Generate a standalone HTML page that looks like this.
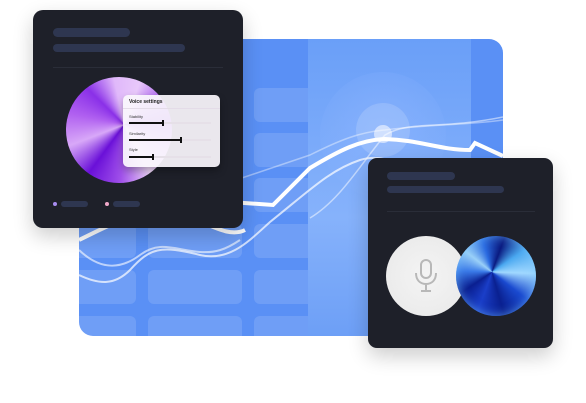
<!DOCTYPE html>
<html><head><style>
html,body{margin:0;padding:0;background:#fff;width:586px;height:403px;overflow:hidden;font-family:"Liberation Sans",sans-serif}
.abs{position:absolute}
</style></head><body>
<div class="abs" style="left:0;top:0;width:586px;height:403px">
<svg width="586" height="403" style="position:absolute;left:0;top:0">
<defs>
<clipPath id="bp"><rect x="79" y="39" width="424" height="297" rx="14"/></clipPath>
<radialGradient id="glow" cx="383" cy="130" r="80" gradientUnits="userSpaceOnUse"><stop offset="0" stop-color="#8fb6ff" stop-opacity=".6"/><stop offset="1" stop-color="#8fb6ff" stop-opacity="0"/></radialGradient>
<linearGradient id="col" x1="0" y1="0" x2="0" y2="1"><stop offset="0" stop-color="#6a9ff8"/><stop offset=".6" stop-color="#86b2fb"/><stop offset="1" stop-color="#6d9ff6"/></linearGradient>
</defs>
<g clip-path="url(#bp)">
<rect x="79" y="39" width="424" height="297" fill="#5a90f5"/>
<g fill="#ffffff" fill-opacity=".13">
<rect x="70" y="88" width="66" height="34" rx="6"/><rect x="148" y="88" width="94" height="34" rx="6"/><rect x="254" y="88" width="94" height="34" rx="6"/>
<rect x="70" y="133" width="66" height="34" rx="6"/><rect x="148" y="133" width="94" height="34" rx="6"/><rect x="254" y="133" width="94" height="34" rx="6"/>
<rect x="70" y="178" width="66" height="34" rx="6"/><rect x="148" y="178" width="94" height="34" rx="6"/><rect x="254" y="178" width="94" height="34" rx="6"/>
<rect x="70" y="224" width="66" height="34" rx="6"/><rect x="148" y="224" width="94" height="34" rx="6"/><rect x="254" y="224" width="94" height="34" rx="6"/>
<rect x="70" y="270" width="66" height="34" rx="6"/><rect x="148" y="270" width="94" height="34" rx="6"/><rect x="254" y="270" width="94" height="34" rx="6"/>
<rect x="70" y="316" width="66" height="34" rx="6"/><rect x="148" y="316" width="94" height="34" rx="6"/><rect x="254" y="316" width="94" height="34" rx="6"/>
</g>
<rect x="308" y="39" width="163" height="297" fill="url(#col)"/>
<circle cx="383" cy="135" r="63" fill="url(#glow)"/>
<circle cx="383" cy="130" r="27" fill="#fff" fill-opacity=".15"/>
<circle cx="383" cy="134" r="9" fill="#fff" fill-opacity=".55"/>
<path d="M79 240 C110 225 140 208 170 212 C200 216 225 240 245 230" stroke="#fff" stroke-width="4" fill="none"/>
<path d="M230 202 L273 205 L310 168 C340 150 360 140 385 139 C420 140 440 150 470 150 L475 143 L503 156" stroke="#fff" stroke-width="4" fill="none"/>
<path d="M79 250 C100 270 120 270 140 255 C160 240 175 250 200 252 C215 253 225 250 240 240" stroke="#fff" stroke-opacity=".6" stroke-width="2" fill="none"/>
<path d="M79 275 C100 285 115 285 130 270 C150 248 160 245 200 255 C230 262 250 240 270 222 C310 190 330 170 360 160 C400 148 430 190 450 210" stroke="#fff" stroke-opacity=".7" stroke-width="2" fill="none"/>
<path d="M230 182 L310 155 C340 140 360 132 385 130 C420 125 470 125 503 120" stroke="#fff" stroke-opacity=".4" stroke-width="1.5" fill="none"/>
<path d="M310 218 C340 200 360 165 385 135 C410 120 440 130 503 117" stroke="#fff" stroke-opacity=".5" stroke-width="1.5" fill="none"/>
</g>
</svg>

<!-- card 1 -->
<div class="abs" style="left:33px;top:10px;width:210px;height:218px;background:#1e2029;border-radius:10px;box-shadow:0 8px 20px rgba(0,0,0,.2)">
<div class="abs" style="left:20px;top:18px;width:77px;height:9px;border-radius:5px;background:#2e3650"></div>
<div class="abs" style="left:20px;top:34px;width:132px;height:8px;border-radius:4px;background:#2e3650"></div>
<div class="abs" style="left:20px;top:57px;width:170px;height:1px;background:#2a2d38"></div>
<div class="abs" style="left:33px;top:67px;width:106px;height:106px;border-radius:50%;background:conic-gradient(from 20deg at 55% 45%,#e8c8fa,#b067f0,#7a20e0,#c890f5,#f0d8fa,#a050ea,#6a10d8,#d8a8f8,#b060f0,#8a30e8,#e0b8fa,#e8c8fa)"></div>
<div class="abs" style="left:90px;top:85px;width:97px;height:72px;border-radius:5px;background:rgba(250,246,252,.93);box-shadow:0 4px 8px rgba(0,0,0,.3)">
<div class="abs" style="left:6px;top:4px;font-size:5px;font-weight:bold;color:#222">Voice settings</div>
<div class="abs" style="left:0;top:13px;width:97px;height:1px;background:#e4dce8"></div>
<div class="abs" style="left:6px;top:19px;font-size:4px;color:#333">Stability</div>
<div class="abs" style="left:6px;top:27px;width:82px;height:2px;background:#e6e0e8"></div>
<div class="abs" style="left:6px;top:27px;width:34px;height:2px;background:#111"></div><div class="abs" style="left:39px;top:25px;width:2px;height:6px;background:#111"></div>
<div class="abs" style="left:6px;top:36px;font-size:4px;color:#333">Similarity</div>
<div class="abs" style="left:6px;top:44px;width:82px;height:2px;background:#e6e0e8"></div>
<div class="abs" style="left:6px;top:44px;width:52px;height:2px;background:#111"></div><div class="abs" style="left:57px;top:42px;width:2px;height:6px;background:#111"></div>
<div class="abs" style="left:6px;top:52px;font-size:4px;color:#333">Style</div>
<div class="abs" style="left:6px;top:61px;width:82px;height:2px;background:#e6e0e8"></div>
<div class="abs" style="left:6px;top:61px;width:24px;height:2px;background:#111"></div><div class="abs" style="left:29px;top:59px;width:2px;height:6px;background:#111"></div>
</div>
<div class="abs" style="left:20px;top:192px;width:4px;height:4px;border-radius:50%;background:#a88cf0"></div>
<div class="abs" style="left:28px;top:191px;width:27px;height:6px;border-radius:3px;background:#2e3650"></div>
<div class="abs" style="left:72px;top:192px;width:4px;height:4px;border-radius:50%;background:#f0a8c8"></div>
<div class="abs" style="left:80px;top:191px;width:27px;height:6px;border-radius:3px;background:#2e3650"></div>
</div>

<!-- card 2 -->
<div class="abs" style="left:368px;top:158px;width:185px;height:190px;background:#1e2029;border-radius:9px;box-shadow:0 8px 20px rgba(0,0,0,.2)">
<div class="abs" style="left:19px;top:14px;width:68px;height:8px;border-radius:4px;background:#2e3650"></div>
<div class="abs" style="left:19px;top:28px;width:117px;height:7px;border-radius:4px;background:#2e3650"></div>
<div class="abs" style="left:19px;top:53px;width:148px;height:1px;background:#2a2d38"></div>
<div class="abs" style="left:18px;top:78px;width:80px;height:80px;border-radius:50%;background:radial-gradient(circle at 50% 50%,#f4f4f4,#e8e8e8)"></div>
<svg class="abs" style="left:44px;top:100px" width="28" height="36" viewBox="0 0 28 36"><rect x="9" y="2" width="10" height="18" rx="5" fill="none" stroke="#b8b8b8" stroke-width="2"/><path d="M4 15 C4 22 8 26 14 26 C20 26 24 22 24 15 M14 26 V33 M9 33 H19" fill="none" stroke="#b8b8b8" stroke-width="2"/></svg>
<div class="abs" style="left:88px;top:78px;width:80px;height:80px;border-radius:50%;background:conic-gradient(from 200deg at 45% 45%,#1a3ec8,#0a1f90,#3a7ae8,#9ad0f8,#2a6ae0,#0a1a80,#4aa8f0,#a0d8ff,#1a4ad0,#0a2090,#1a3ec8);box-shadow:inset 0 0 10px rgba(120,200,255,.6)"></div>
</div>
</div>
</body></html>
